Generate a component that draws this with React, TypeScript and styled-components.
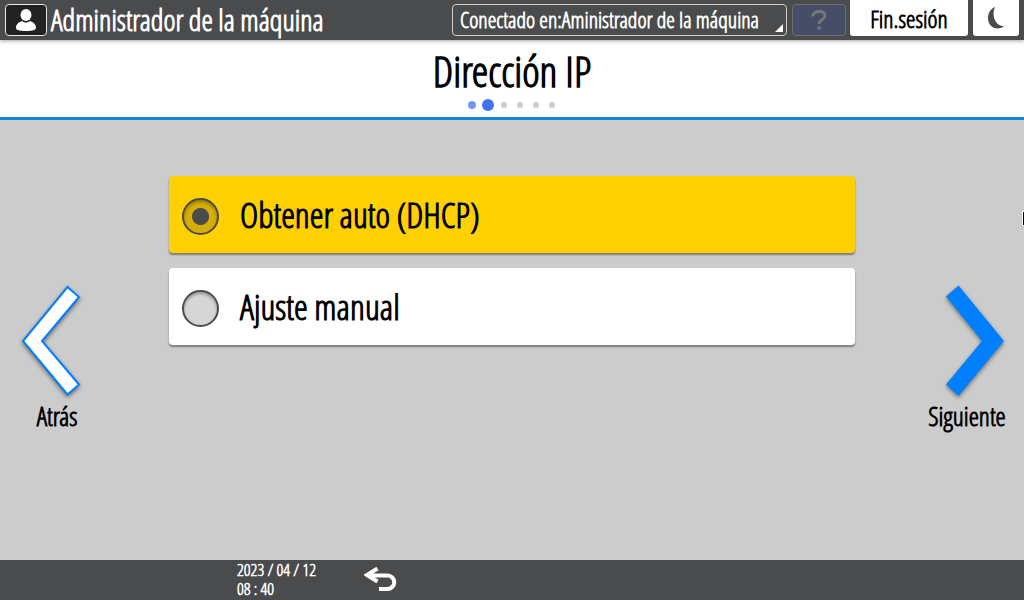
import React, { useState } from 'react';
import styled, { createGlobalStyle } from 'styled-components';

const GlobalStyle = createGlobalStyle`
  *, *::before, *::after { box-sizing: border-box; }
  body {
    margin: 0;
    background: #cccccc;
    color: #000;
    font-family: 'Open Sans Condensed Light', 'Roboto Condensed', 'Liberation Sans', sans-serif;
    font-weight: 700;
  }
  button, select, input { font: inherit; color: inherit; margin: 0; }
`;

const Screen = styled.div`
  position: relative;
  display: flex;
  flex-direction: column;
  min-height: 100vh;
  overflow: hidden;
`;

const TopBar = styled.header`
  display: flex;
  align-items: flex-start;
  height: 40px;
  padding: 0 5px;
  background: #4a4b4d;
  color: #fff;
  position: relative;
  box-shadow: 0 1px 4px rgba(0, 0, 0, 0.35);
`;

const UserBadge = styled.span`
  display: flex;
  justify-content: center;
  align-items: center;
  width: 42px;
  height: 32px;
  margin-top: 4px;
  border: 1px solid #e6e6e6;
  border-radius: 4px;
  background: #222;
`;

const UserName = styled.span`
  flex: 1;
  padding-left: 4px;
  font-size: 29px;
  line-height: 40px;
  white-space: nowrap;
`;

const Session = styled.label`
  position: relative;
  width: 335px;
  height: 32px;
  margin: 4px 5px 0 0;
  border: 1px solid #d0d0d0;
  border-radius: 4px;
`;

const SessionSelect = styled.select`
  appearance: none;
  width: 100%;
  height: 28px;
  padding: 0 7px;
  border: 0;
  background: transparent;
  font-size: 22px;
  line-height: 28px;
`;

const Corner = styled.svg`
  position: absolute;
  right: 3px;
  bottom: 3px;
  pointer-events: none;
`;

const HelpButton = styled.button`
  width: 54px;
  height: 32px;
  margin: 4px 4px 0 0;
  padding: 0;
  border: 1px solid #6e7075;
  border-radius: 4px;
  background: #464d66;
  display: flex;
  align-items: center;
  justify-content: center;
`;

const TabButton = styled.button<{ $width: number }>`
  display: flex;
  align-items: center;
  justify-content: center;
  width: ${(p) => p.$width}px;
  height: 36px;
  padding: 0;
  border: 0;
  border-radius: 0 0 3px 3px;
  background: #fff;
  color: #000;
  font-size: 24px;
  & + & { margin-left: 5px; }
`;

const TitleBar = styled.div`
  display: flex;
  flex-direction: column;
  align-items: center;
  height: 80px;
  padding-top: 7px;
  border-bottom: 3px solid #1583d8;
  background: #fff;
`;

const Title = styled.h1`
  margin: 0;
  padding-bottom: 2px;
  font-size: 42px;
  line-height: 48px;
`;

const Steps = styled.ol`
  display: flex;
  align-items: center;
  height: 16px;
  margin: 0;
  padding: 0;
  list-style: none;
`;

const Step = styled.li<{ $state: 'done' | 'current' | 'next' }>`
  display: flex;
  justify-content: center;
  width: 16px;
  &::before {
    content: '';
    width: ${(p) => ({ done: 8, current: 12, next: 6 })[p.$state]}px;
    aspect-ratio: 1;
    border-radius: 50%;
    background: ${(p) => ({ done: '#7499f0', current: '#3f73f2', next: '#cccccc' })[p.$state]};
  }
`;

const Content = styled.main`
  flex: 1;
  display: grid;
  grid-template-columns: 169px 1fr 169px;
  align-items: start;
  background: #cccccc;
`;

const NavButton = styled.button<{ $end?: boolean }>`
  justify-self: ${(p) => (p.$end ? 'end' : 'start')};
  display: flex;
  flex-direction: column;
  align-items: center;
  width: 114px;
  margin-top: 160px;
  padding: 0;
  border: 0;
  background: transparent;
  font-size: 26px;
  line-height: 32px;
`;

const Arrow = styled.svg<{ $end?: boolean }>`
  margin-left: ${(p) => (p.$end ? 16 : 0)}px;
  margin-right: ${(p) => (p.$end ? 0 : 12)}px;
  filter: drop-shadow(0 2px 2px rgba(0, 0, 0, 0.45));
`;

const Options = styled.fieldset`
  display: flex;
  flex-direction: column;
  gap: 15px;
  min-width: 0;
  margin: 0;
  padding: 56px 0 0;
  border: 0;
`;

const Option = styled.label<{ $selected: boolean }>`
  display: flex;
  align-items: center;
  gap: 21px;
  height: 77px;
  padding: 3px 13px 0;
  border-radius: 4px;
  background: ${(p) => (p.$selected ? '#ffd103' : '#ffffff')};
  box-shadow: 0 2px 2px rgba(0, 0, 0, 0.4);
  font-size: 35px;
  line-height: 44px;
`;

const OptionText = styled.span`
  padding-bottom: 2px;
`;

const Radio = styled.input`
  appearance: none;
  flex: none;
  width: 37px;
  height: 37px;
  border: 2px solid #4c4c4c;
  border-radius: 50%;
  background: #d6d6d6;
  box-shadow: inset 0 2px 3px rgba(0, 0, 0, 0.3);
  &:checked {
    background: radial-gradient(circle, #4b4b4b 8px, #d5ae08 9px);
  }
`;

const BottomBar = styled.footer`
  display: flex;
  align-items: flex-start;
  gap: 46px;
  height: 40px;
  padding-left: 237px;
  background: #4a4b4d;
  color: #fff;
`;

const Clock = styled.time`
  display: flex;
  flex-direction: column;
  width: 81px;
  font-size: 17px;
  line-height: 19px;
  white-space: nowrap;
`;

const ReturnButton = styled.button`
  padding: 7px 0 0;
  border: 0;
  background: transparent;
`;

const EdgeMark = styled.span`
  position: absolute;
  top: 211px;
  right: 0;
  width: 2px;
  height: 15px;
  border: solid #fff;
  border-width: 1px 0 1px 1px;
  background: #000;
`;

const steps = ['done', 'current', 'next', 'next', 'next', 'next'] as const;
const choices = ['Obtener auto (DHCP)', 'Ajuste manual'];

export default function App() {
  const [choice, setChoice] = useState(choices[0]);
  return (
    <Screen>
      <GlobalStyle />
      <TopBar>
        <UserBadge>
          <svg width="22" height="24" viewBox="0 0 22 24" fill="#fff" aria-hidden="true">
            <ellipse cx="11" cy="7" rx="5.5" ry="6" />
            <path d="M1 20c0-4 3-6 6-7 1.500 1.200 2.700 1.500 4 1.500s2.500-.3 4-1.500c3 1 6 3 6 7 0 2-3 3-10 3S1 22 1 20z" />
          </svg>
        </UserBadge>
        <UserName>Administrador de la máquina</UserName>
        <Session>
          <SessionSelect aria-label="Sesión">
            <option>Conectado en:Aministrador de la máquina</option>
          </SessionSelect>
          <Corner width="8" height="8" viewBox="0 0 8 8" aria-hidden="true">
            <path d="M8 0v8H0z" fill="#fff" />
          </Corner>
        </Session>
        <HelpButton aria-label="Ayuda">
          <svg width="16" height="20" viewBox="0 0 16 20" fill="none" stroke="#77787b" strokeWidth="2.800" aria-hidden="true">
            <path d="M2 6.500C2 3 4.500 1.500 8 1.500S14 3 14 6c0 3.500-6 4-6 8" />
            <path d="M8 16.500v3" strokeWidth="3.200" />
          </svg>
        </HelpButton>
        <TabButton $width={118}>Fin.sesión</TabButton>
        <TabButton $width={46} aria-label="Ahorro de energía">
          <svg width="18" height="24" viewBox="0 0 18 24" aria-hidden="true">
            <path d="M8 1C3 3 1 7.500 1 12c0 6 4 10.500 9.500 10.500 2.500 0 4.500-.7 6.500-2.500C9 20.500 4 10 8 1z" fill="#4a4b4d" />
          </svg>
        </TabButton>
      </TopBar>
      <TitleBar>
        <Title>Dirección IP</Title>
        <Steps>
          {steps.map((state, i) => (
            <Step key={i} $state={state} />
          ))}
        </Steps>
      </TitleBar>
      <Content>
        <NavButton>
          <Arrow width="60" height="120" viewBox="0 0 60 120" aria-hidden="true">
            <path d="M46.500 7 58 17 21 61 58 104.500 46.500 114.500 2 61z" fill="#fff" stroke="#0080ff" strokeWidth="2" />
          </Arrow>
          Atrás
        </NavButton>
        <Options aria-label="Dirección IP">
          {choices.map((label) => (
            <Option key={label} $selected={label === choice}>
              <Radio type="radio" name="ip" checked={label === choice} onChange={() => setChoice(label)} />
              <OptionText>{label}</OptionText>
            </Option>
          ))}
        </Options>
        <NavButton $end>
          <Arrow $end width="60" height="120" viewBox="0 0 60 120" aria-hidden="true">
            <path d="M13.500 5.500 1 16.500 37 61 1 104.500 13.500 116 59 61z" fill="#0080ff" />
          </Arrow>
          Siguiente
        </NavButton>
      </Content>
      <BottomBar>
        <Clock dateTime="2023-04-12T08:40">
          <span>2023 / 04 / 12</span>
          <span>08 : 40</span>
        </Clock>
        <ReturnButton aria-label="Volver">
          <svg width="34" height="26" viewBox="0 0 34 26" fill="none" stroke="#fff" strokeWidth="4" aria-hidden="true">
            <path d="M5 8.500h18.500a6.700 6.700 0 0 1 0 13.500H15" />
            <path d="M13.500 1.500 3 8l10.500 6.500" strokeWidth="4" />
          </svg>
        </ReturnButton>
      </BottomBar>
      <EdgeMark />
    </Screen>
  );
}
